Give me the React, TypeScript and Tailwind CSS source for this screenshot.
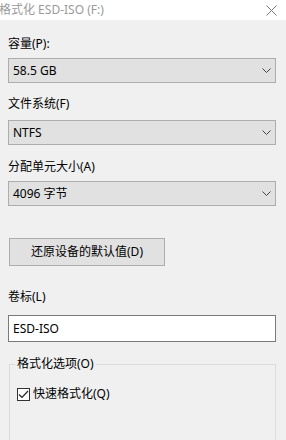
const font = { fontFamily: '"Noto Sans", "Noto Sans CJK SC", sans-serif' };

function Chevron() {
  return (
    <svg width="9" height="5" viewBox="0 0 9 5" className="text-[#444]">
      <path d="M0.5 0.5 L4.5 4.5 L8.5 0.5" fill="none" stroke="currentColor" strokeWidth="1" />
    </svg>
  );
}

function Combo({ value }: { value: string }) {
  return (
    <div className="flex h-[25px] w-[268px] items-center justify-between border border-[#adadad] bg-[#e1e1e1] pl-[4px] pr-[4px]">
      <span className="text-[12px] leading-[16px] text-black">{value}</span>
      <Chevron />
    </div>
  );
}

function Label({ text, className }: { text: string; className: string }) {
  return <div className={`h-[16px] text-[12px] leading-[16px] text-black ${className}`}>{text}</div>;
}

export default function App() {
  return (
    <div className="h-[440px] w-[286px] overflow-hidden bg-[#f0f0f0]" style={font}>
      <div className="flex h-[20px] items-center justify-between bg-white pr-[9px]">
        <span className="-ml-[1px] text-[12px] leading-[16px] text-[#9a9a9a]">格式化 ESD-ISO (F:)</span>
        <svg width="11" height="11" viewBox="0 0 11 11" className="text-[#777]">
          <path d="M0.5 0.5 L10.5 10.5 M10.5 0.5 L0.5 10.5" stroke="currentColor" strokeWidth="1" />
        </svg>
      </div>

      <div className="flex flex-col pl-[8px]">
        <Label text="容量(P):" className="mt-[16px]" />
        <div className="mt-[6px]">
          <Combo value="58.5 GB" />
        </div>

        <Label text="文件系统(F)" className="mt-[13px]" />
        <div className="mt-[8px]">
          <Combo value="NTFS" />
        </div>

        <Label text="分配单元大小(A)" className="mt-[14px]" />
        <div className="mt-[6px]">
          <Combo value="4096 字节" />
        </div>

        <button className="ml-[1px] mt-[32px] flex h-[28px] w-[156px] items-center justify-center border border-[#adadad] bg-[#e1e1e1] text-[12px] leading-[16px] text-black">
          还原设备的默认值(D)
        </button>

        <Label text="卷标(L)" className="mt-[23px]" />
        <div className="mt-[10px] flex h-[27px] w-[268px] items-center border border-[#7a7a7a] bg-white pl-[4px]">
          <span className="text-[12px] leading-[16px] text-black">ESD-ISO</span>
        </div>

        <div className="relative ml-[1px] mt-[22px] h-[90px] w-[267px] border border-[#dcdcdc]">
          <span className="absolute -top-[9px] left-[5px] bg-[#f0f0f0] px-[2px] text-[12px] leading-[16px] text-black">
            格式化选项(O)
          </span>
          <div className="ml-[7px] mt-[21px] flex items-center gap-[3px]">
            <div className="flex h-[13px] w-[13px] items-center justify-center border border-[#333] bg-white">
              <svg width="11" height="9" viewBox="0 0 11 9">
                <path d="M1 4.5 L4 7.5 L10 1" fill="none" stroke="#222" strokeWidth="1.2" />
              </svg>
            </div>
            <span className="text-[12px] leading-[16px] text-black">快速格式化(Q)</span>
          </div>
        </div>
      </div>
    </div>
  );
}
